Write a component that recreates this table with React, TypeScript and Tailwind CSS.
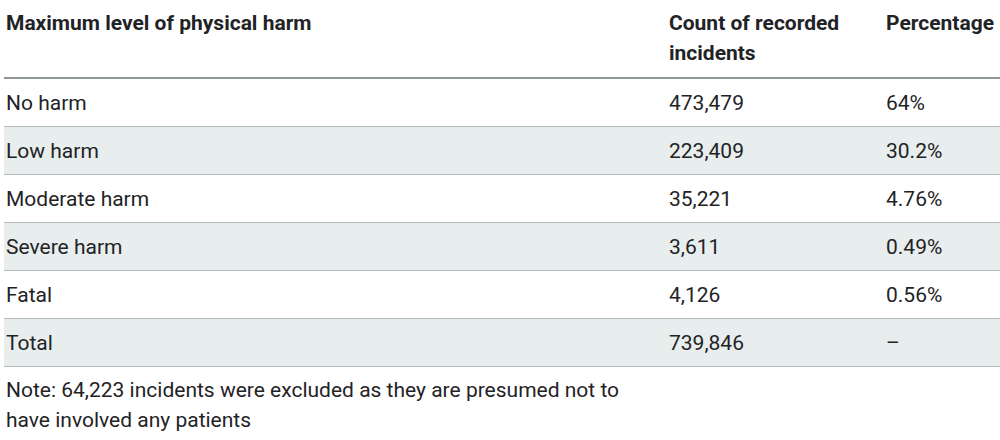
import React from 'react';

interface HarmRow {
  level: string;
  count: string;
  pct: string;
}

const rows: HarmRow[] = [
  { level: 'No harm', count: '473,479', pct: '64%' },
  { level: 'Low harm', count: '223,409', pct: '30.2%' },
  { level: 'Moderate harm', count: '35,221', pct: '4.76%' },
  { level: 'Severe harm', count: '3,611', pct: '0.49%' },
  { level: 'Fatal', count: '4,126', pct: '0.56%' },
  { level: 'Total', count: '739,846', pct: '–' },
];

const App: React.FC = () => {
  return (
    <div className="w-[1000px] h-[440px] bg-white pl-[4px] text-[#1f2326] font-['Roboto',sans-serif] overflow-hidden">
      <table className="w-[996px] table-fixed border-collapse">
        <colgroup>
          <col className="w-[663px]" />
          <col className="w-[217px]" />
          <col />
        </colgroup>
        <thead>
          <tr className="border-b-2 border-[#8e9599] align-top">
            <th className="text-left font-bold text-[21px] leading-[30px] pl-[2px] pt-[8px] pb-[9px]">
              Maximum level of physical harm
            </th>
            <th className="text-left font-bold text-[21px] leading-[30px] pl-[2px] pt-[8px] pb-[9px]">
              Count of recorded incidents
            </th>
            <th className="text-left font-bold text-[21px] leading-[30px] pl-[2px] pt-[8px] pb-[9px] whitespace-nowrap">
              Percentage
            </th>
          </tr>
        </thead>
        <tbody>
          {rows.map((r, i) => (
            <tr
              key={r.level}
              className={`border-b border-[#b4b9bc] ${i % 2 === 1 ? 'bg-[#e8eded]' : 'bg-white'}`}
            >
              <td className="text-[21px] leading-[30px] pl-[2px] pt-[9px] pb-[8px]">{r.level}</td>
              <td className="text-[21px] leading-[30px] pl-[2px] pt-[9px] pb-[8px]">{r.count}</td>
              <td className="text-[21px] leading-[30px] pl-[2px] pt-[9px] pb-[8px]">{r.pct}</td>
            </tr>
          ))}
        </tbody>
      </table>
      <p className="w-[640px] text-[21px] leading-[30px] pl-[2px] pt-[8px]">
        Note: 64,223 incidents were excluded as they are presumed not to have involved any patients
      </p>
    </div>
  );
};

export default App;
